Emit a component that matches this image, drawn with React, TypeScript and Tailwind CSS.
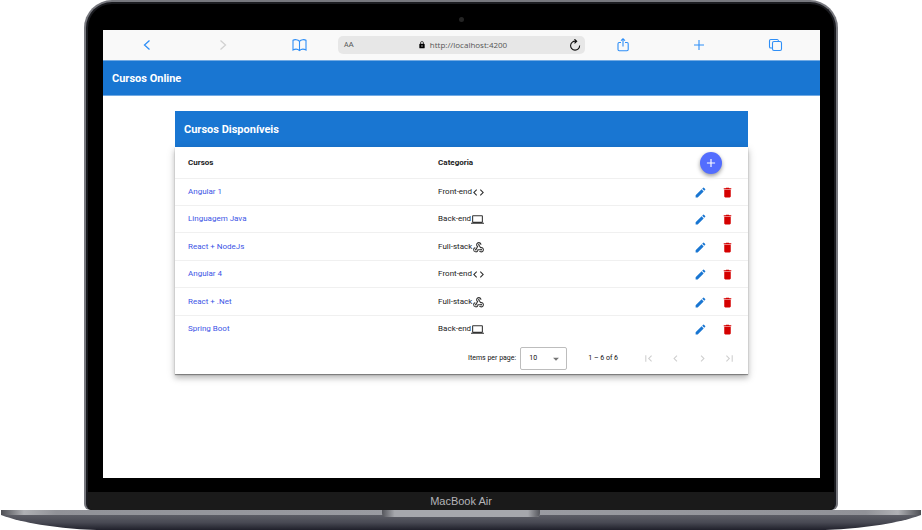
import type { ReactNode } from "react";
import {
  MdAdd,
  MdArrowDropDown,
  MdChevronLeft,
  MdChevronRight,
  MdCode,
  MdComputer,
  MdDelete,
  MdEdit,
  MdFirstPage,
  MdLastPage,
  MdLock,
  MdWebhook,
} from "react-icons/md";

type Category = "Front-end" | "Back-end" | "Full-stack";

const courses: { name: string; category: Category }[] = [
  { name: "Angular 1", category: "Front-end" },
  { name: "Linguagem Java", category: "Back-end" },
  { name: "React + NodeJs", category: "Full-stack" },
  { name: "Angular 4", category: "Front-end" },
  { name: "React + .Net", category: "Full-stack" },
  { name: "Spring Boot", category: "Back-end" },
];

const categoryIcons: Record<Category, ReactNode> = {
  "Front-end": <MdCode size={13} />,
  "Back-end": <MdComputer size={13} />,
  "Full-stack": <MdWebhook size={13} />,
};

function ToolButton({ label, disabled, children }: { label: string; disabled?: boolean; children: ReactNode }) {
  return (
    <button
      type="button"
      aria-label={label}
      disabled={disabled}
      className="flex h-full w-[76px] shrink-0 items-center justify-center text-[#2f8ff7] disabled:text-[#d2d2d2]"
    >
      <svg width="16" height="16" viewBox="0 0 16 16" fill="none" stroke="currentColor" strokeWidth="1.1">
        {children}
      </svg>
    </button>
  );
}

function BrowserBar() {
  return (
    <div className="flex h-[30px] items-center bg-[#f9f9f9] pr-[7px] pl-1.5">
      <ToolButton label="Back">
        <path d="M10.5 3.5 5.5 8l5 4.5" strokeWidth="1.3" />
      </ToolButton>
      <ToolButton label="Forward" disabled>
        <path d="M5.5 3.5l5 4.5-5 4.5" strokeWidth="1.3" />
      </ToolButton>
      <ToolButton label="Bookmarks">
        <path d="M8.500 4.300C7 2.400 3.500 2.300 2 3.300V13c2-1 5-.8 6.500.6C10 12.200 13 12 15 13V3.300C13.500 2.300 10 2.400 8.500 4.300V13.600" />
      </ToolButton>
      <div className="ml-px flex h-[18px] min-w-0 flex-1 items-center rounded-[5px] bg-[#e7e7e7] pr-1 pl-1.5 text-[#555]">
        <button type="button" aria-label="Text size" className="flex w-3 items-baseline leading-3 text-[#555]">
          <span className="text-[7px]">A</span>
          <span className="text-[8px]">A</span>
        </button>
        <div className="flex min-w-0 flex-1 items-center justify-center gap-1">
          <MdLock size={8} className="shrink-0 text-black" />
          <span className="font-['Open_Sans',sans-serif] text-[8px] leading-3">http://localhost:4200</span>
        </div>
        <button type="button" aria-label="Reload" className="flex w-3 justify-end text-[#111]">
          <svg width="12" height="12" viewBox="0 0 12 12" fill="none" stroke="currentColor" strokeWidth="1.1" className="shrink-0">
            <path d="M10.600 6.500A4.500 4.500 0 1 1 6.800 2.200M5.400.2 7.700 2.200 5.500 4.300" />
          </svg>
        </button>
      </div>
      <ToolButton label="Share">
        <path d="M6 5.500H4.200Q3 5.500 3 6.700V12.500Q3 13.700 4.200 13.700H12Q13.200 13.700 13.200 12.500V6.700Q13.200 5.500 12 5.500H10M8 9.500V1.800M6 3.700 8 1.700l2 2" />
      </ToolButton>
      <ToolButton label="New tab">
        <path d="M8 3v10M3 8h10" />
      </ToolButton>
      <ToolButton label="Tabs">
        <rect x="5.500" y="4.500" width="9" height="9" rx="1.500" />
        <path d="M5.500 11H3.800Q2.500 11 2.500 9.700V3.800Q2.500 2.500 3.800 2.500H10.200Q11.500 2.500 11.500 4.500" />
      </ToolButton>
    </div>
  );
}

function CourseTable() {
  return (
    <table className="h-[195px] w-full table-fixed border-collapse text-left text-[8px] leading-3 text-[#222]">
      <colgroup>
        <col className="w-[44%]" />
        <col className="w-[38%]" />
        <col className="w-[18%]" />
      </colgroup>
      <thead>
        <tr className="h-[31px] border-b border-[#f0f0f0]">
          <th className="pt-0.5 pb-0 pl-[13px] font-bold">Cursos</th>
          <th className="pt-0.5 pb-0 pl-[11px] font-bold">Categoria</th>
          <th className="pt-0.5 pr-[26px] pb-0">
            <button
              type="button"
              aria-label="Adicionar curso"
              className="ml-auto flex size-[22px] items-center justify-center rounded-full bg-[#536dfe] text-white shadow-[0_2px_4px_rgba(0,0,0,0.4)]"
            >
              <MdAdd size={14} />
            </button>
          </th>
        </tr>
      </thead>
      <tbody>
        {courses.map((course) => (
          <tr key={course.name} className="border-b border-[#f0f0f0] last:border-b-0">
            <td className="py-0 pl-[13px]">
              <a href="#curso" className="text-[#3d55e6]">
                {course.name}
              </a>
            </td>
            <td className="py-0 pl-[11px]">
              <span className="flex items-center">
                {course.category}
                <span className="pt-px text-[#333]">{categoryIcons[course.category]}</span>
              </span>
            </td>
            <td className="pt-px pr-[7px] pb-0">
              <div className="flex justify-end">
                <button type="button" aria-label={`Editar ${course.name}`} className="flex w-[27px] justify-center text-[#1976d2]">
                  <MdEdit size={13} />
                </button>
                <button type="button" aria-label={`Excluir ${course.name}`} className="flex w-[27px] justify-center text-[#d50000]">
                  <MdDelete size={13} />
                </button>
              </div>
            </td>
          </tr>
        ))}
      </tbody>
    </table>
  );
}

function PageButton({ label, children }: { label: string; children: ReactNode }) {
  return (
    <button type="button" aria-label={label} disabled className="flex w-[27px] justify-center text-[#cfcfcf]">
      {children}
    </button>
  );
}

function Paginator() {
  return (
    <div className="flex h-8 items-center justify-end pr-[5px] text-[7px] leading-3 text-[#111]">
      <label htmlFor="page-size" className="mr-1">
        Items per page:
      </label>
      <div className="relative mr-[21px]">
        <select
          id="page-size"
          defaultValue="10"
          className="block h-[23px] w-[47px] appearance-none rounded-[2px] border border-[#bdbdbd] bg-white pl-2 text-[7px]"
        >
          <option>5</option>
          <option>10</option>
          <option>20</option>
        </select>
        <MdArrowDropDown size={14} className="pointer-events-none absolute top-[5px] right-1 text-[#757575]" />
      </div>
      <span className="mr-[17px]">1 – 6 of 6</span>
      <PageButton label="First page">
        <MdFirstPage size={13} />
      </PageButton>
      <PageButton label="Previous page">
        <MdChevronLeft size={13} />
      </PageButton>
      <PageButton label="Next page">
        <MdChevronRight size={13} />
      </PageButton>
      <PageButton label="Last page">
        <MdLastPage size={13} />
      </PageButton>
    </div>
  );
}

function LaptopBase() {
  return (
    <div className="relative h-5">
      <svg className="block h-full w-full" viewBox="0 0 922 20" preserveAspectRatio="none" aria-hidden="true">
        <defs>
          <linearGradient id="under" x1="0" y1="0" x2="0" y2="1">
            <stop offset="0" stopColor="#5d5e66" />
            <stop offset="0.500" stopColor="#484953" />
            <stop offset="1" stopColor="#20202b" />
          </linearGradient>
          <linearGradient id="edge" x1="0" y1="0" x2="1" y2="0">
            <stop offset="0" stopColor="#4d4e54" />
            <stop offset="0.025" stopColor="#b0b1b5" />
            <stop offset="0.060" stopColor="#919298" />
            <stop offset="0.500" stopColor="#9c9da3" />
            <stop offset="0.940" stopColor="#919298" />
            <stop offset="0.975" stopColor="#b0b1b5" />
            <stop offset="1" stopColor="#4d4e54" />
          </linearGradient>
        </defs>
        <path d="M1 5H921C900 13 865 18 835 19.500L825 20H97L85 19.500C57 18 22 13 1 5Z" fill="url(#under)" />
        <path d="M1 0H921V5H1Z" fill="url(#edge)" />
      </svg>
      <div className="absolute inset-x-0 top-0 mx-auto h-[7px] w-[158px] rounded-b-[4px] bg-linear-to-r from-[#55565c] via-[#a6a7ac] via-8% to-[#a6a7ac]">
        <div className="ml-auto h-full w-3 rounded-br-[4px] bg-linear-to-r from-[#a6a7ac] to-[#55565c]" />
      </div>
    </div>
  );
}

export default function App() {
  return (
    <div className="flex min-h-screen flex-col bg-white font-[Roboto,sans-serif]">
      <div className="flex flex-1 flex-col px-[84px]">
        <div className="flex flex-1 flex-col rounded-t-[28px] rounded-b-[6px] bg-[#77787e] px-0.5 pt-0.5">
          <div className="flex flex-1 flex-col overflow-hidden rounded-t-[26px] rounded-b-[6px] border-x-2 border-t-2 border-[#1b1c20] bg-black">
            <div className="flex h-[26px] items-center justify-center">
              <div className="mt-1 size-[5px] rounded-full bg-[#242424]" />
            </div>
            <div className="mr-[14px] ml-[15px] flex-1 bg-white">
              <BrowserBar />
              <header className="flex h-9 items-center border-y border-[#72aae3] bg-[#1976d2] px-[9px]">
                <h1 className="pt-px text-[11px] leading-4 font-bold text-white">Cursos Online</h1>
              </header>
              <main className="px-[72px] pt-[15px] pb-4">
                <div className="flex h-9 items-center bg-[#1976d2] px-[9px]">
                  <h2 className="pt-px text-[11px] leading-4 font-bold text-white">Cursos Disponíveis</h2>
                </div>
                <div className="bg-white shadow-[0_1px_1px_rgba(0,0,0,0.35),0_4px_5px_rgba(0,0,0,0.16),0_3px_8px_1px_rgba(0,0,0,0.14)]">
                  <CourseTable />
                  <Paginator />
                </div>
              </main>
            </div>
            <div className="h-[14px]" />
            <div className="flex h-[18px] items-center justify-center bg-[#1a1a1a] font-['Liberation_Sans',sans-serif] text-[11px] leading-4 text-[#b4b4b8]">
              MacBook Air
            </div>
          </div>
        </div>
      </div>
      <LaptopBase />
    </div>
  );
}
